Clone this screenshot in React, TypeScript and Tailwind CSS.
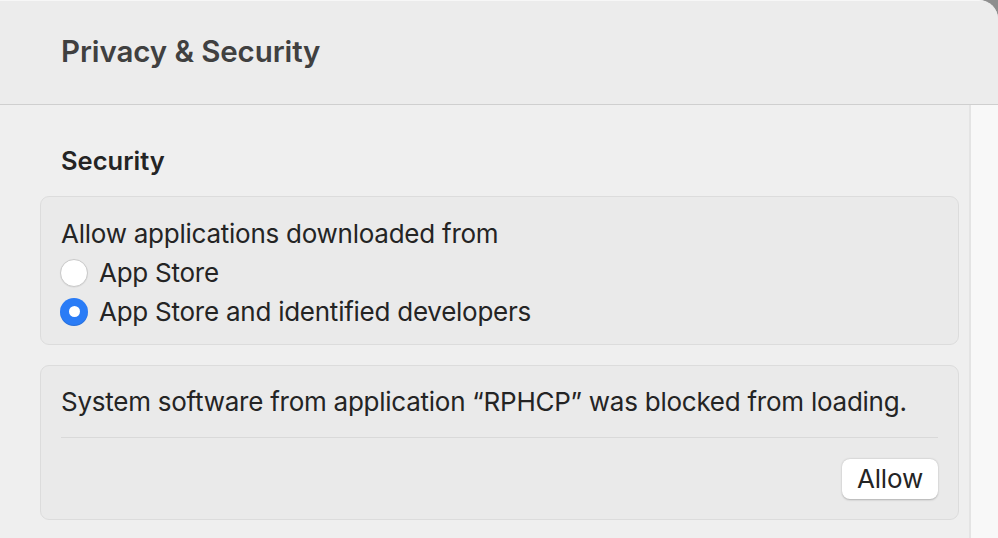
import React from 'react';

const font = { fontFamily: 'Inter, "Noto Sans", sans-serif' };

function Radio({ checked }: { checked?: boolean }) {
  if (checked) {
    return (
      <span className="-ml-[1px] flex h-[28px] w-[28px] items-center justify-center rounded-full bg-[#2a7cf6] shadow-[inset_0_-1px_1px_rgba(0,0,0,0.12)]">
        <span className="h-[11px] w-[11px] rounded-full bg-white" />
      </span>
    );
  }
  return (
    <span className="-ml-[1px] h-[28px] w-[28px] rounded-full border border-[#c9c9c9] bg-white shadow-[0_0.5px_1px_rgba(0,0,0,0.08)]" />
  );
}

export default function App() {
  return (
    <div className="h-[538px] w-[998px] overflow-hidden bg-[#8e8e8e] text-[#242424]" style={font}>
      <div className="flex h-full flex-col overflow-hidden rounded-tr-[19px] border-t border-[#f7f7f7] bg-[#efefef]">
        {/* toolbar */}
        <div className="h-[104px] shrink-0 border-b border-[#cfcfcf] bg-[#ececec] px-[61px] pt-[32px]">
          <h1 className="text-[29.5px] font-semibold leading-[36px] tracking-[-0.1px] text-[#404040]">Privacy &amp; Security</h1>
        </div>

        <div className="flex flex-1">
          <div className="flex-1 pl-[40px] pr-[10px] pt-[41px]">
            <h2 className="mb-[20px] pl-[21px] text-[25.5px] font-semibold leading-[30px] text-[#242424]">Security</h2>

            <div className="rounded-[9px] border border-[#dcdcdc] bg-[#eaeaea] px-[20px] pb-[13px] pt-[22px] text-[26px] leading-[30px] tracking-[-0.25px]">
              <p>Allow applications downloaded from</p>
              <div className="mt-[4px] flex h-[39px] items-center gap-[11px]">
                <Radio />
                <span>App Store</span>
              </div>
              <div className="flex h-[39px] items-center gap-[11px]">
                <Radio checked />
                <span>App Store and identified developers</span>
              </div>
            </div>

            <div className="mt-[20px] rounded-[9px] border border-[#dcdcdc] bg-[#eaeaea] px-[20px] pb-[20px] pt-[21px] text-[26px] leading-[30px] tracking-[-0.25px]">
              <p className="pb-[20px]">
                System software from application “RPHCP” was blocked from loading.
              </p>
              <div className="border-t border-[#d9d9d9]" />
              <div className="flex justify-end pt-[21px]">
                <button className="h-[40px] w-[96px] rounded-[8px] bg-white text-[26px] tracking-[-0.2px] text-[#242424] shadow-[0_0.5px_2px_rgba(0,0,0,0.25)]">
                  Allow
                </button>
              </div>
            </div>
          </div>

          {/* scrollbar track */}
          <div className="w-[29px] shrink-0 border-l-2 border-[#e4e4e4] bg-[#f8f8f8]" />
        </div>
      </div>
    </div>
  );
}
